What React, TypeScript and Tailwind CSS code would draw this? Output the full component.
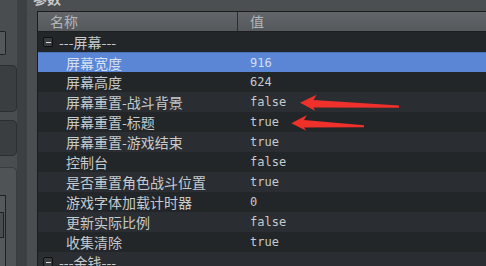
import React from 'react';

type Row = { name: string; value?: string; group?: boolean; selected?: boolean };

const rows: Row[] = [
  { name: '---屏幕---', group: true },
  { name: '屏幕宽度', value: '916', selected: true },
  { name: '屏幕高度', value: '624' },
  { name: '屏幕重置-战斗背景', value: 'false' },
  { name: '屏幕重置-标题', value: 'true' },
  { name: '屏幕重置-游戏结束', value: 'true' },
  { name: '控制台', value: 'false' },
  { name: '是否重置角色战斗位置', value: 'true' },
  { name: '游戏字体加载计时器', value: '0' },
  { name: '更新实际比例', value: 'false' },
  { name: '收集清除', value: 'true' },
  { name: '---金钱---', group: true },
];

const cjk = { fontFamily: '"Noto Sans CJK SC", "Noto Sans", sans-serif' };
const mono = { fontFamily: '"DejaVu Sans Mono", "Noto Sans CJK SC", monospace' };

function LeftWidgets() {
  return (
    <div className="w-[17px] shrink-0 flex flex-col bg-[#4a4d50]">
      <div className="h-[31px]" />
      <div className="h-[24px] w-[6px] rounded-r-[2px] border border-l-0 border-[#1f2123] bg-[#55585b]" />
      <div className="h-[10px]" />
      <div className="h-[47px] w-[17px] rounded-r-[5px] border border-l-0 border-[#2c2e31] bg-[#3b3e41]" />
      <div className="h-[8px]" />
      <div className="h-[36px] w-[17px] rounded-r-[5px] border border-l-0 border-[#2c2e31] bg-[#3b3e41]" />
      <div className="h-[11px]" />
      <div className="flex-1 w-[17px] rounded-tr-[5px] border border-l-0 border-b-0 border-[#3a3d40] bg-[#505356] flex flex-col">
        <div className="h-[27px]" />
        <div className="flex-1 w-[6px] border-t border-r border-[#1f2123] bg-[#55585b] flex flex-col">
          <div className="h-[16px]" />
          <div className="h-[26px] w-[4px] border border-l-0 border-[#1f2123] bg-[#4a4d50]" />
        </div>
      </div>
    </div>
  );
}

function GroupBox() {
  return (
    <span className="ml-[5px] mr-[6px] w-[10px] h-[10px] rounded-[2px] border border-[#0f1012] bg-[#3a3d40] flex items-center justify-center">
      <span className="block w-[5px] h-[1px] bg-[#d8d8d8]" />
    </span>
  );
}

function TableRow({ row, index }: { row: Row; index: number }) {
  const bg = row.selected
    ? 'bg-[#5a86d5] border-t border-[#4c73b8]'
    : index % 2 === 0
      ? 'bg-[#222628]'
      : 'bg-[#2a2d31]';
  const text = row.selected ? 'text-[#d6dff0]' : 'text-[#c6cacd]';
  return (
    <div className={`h-[20px] shrink-0 flex ${bg}`}>
      <div className="w-[200px] shrink-0 flex items-center">
        {row.group ? (
          <>
            <GroupBox />
            <span className={`text-[14px] leading-[20px] whitespace-nowrap ${text}`} style={cjk}>
              {row.name}
            </span>
          </>
        ) : (
          <span className={`pl-[28px] text-[14px] leading-[20px] whitespace-nowrap ${text}`} style={cjk}>
            {row.name}
          </span>
        )}
      </div>
      <div className="flex-1 flex items-center pl-[12px]">
        {row.value && (
          <span className={`text-[12px] leading-[20px] ${text}`} style={mono}>
            {row.value}
          </span>
        )}
      </div>
    </div>
  );
}

function Arrows() {
  return (
    <svg className="absolute left-0 top-0 pointer-events-none" width="486" height="266" viewBox="0 0 486 266">
      <polygon
        fill="#f0302a"
        points="300,102.7 316.5,94.7 313.5,100 399,105.6 399,107.8 313.5,107.6 315,110.8"
      />
      <polygon
        fill="#f0302a"
        points="291.3,123.3 307,115 304,120 364,125.2 364,127.2 304,127.4 306.3,130.8"
      />
    </svg>
  );
}

export default function App() {
  return (
    <div className="relative w-[486px] h-[266px] overflow-hidden flex bg-[#4a4d50]">
      <LeftWidgets />
      <div className="w-[10px] shrink-0 bg-[#3d4043]" />
      <div className="flex-1 flex flex-col min-w-0">
        <div className="h-[11px] shrink-0 overflow-hidden bg-[#4c4f52]">
          <div
            className="pl-[6px] -mt-[9px] text-[14px] leading-[14px] font-bold text-[#c4c8cc] whitespace-nowrap"
            style={cjk}
          >
            参数
          </div>
        </div>
        <div className="flex-1 flex min-h-0">
          <div className="w-[10px] shrink-0 bg-[#4b4e51]" />
          <div className="flex-1 flex flex-col border-l border-t border-[#1a1c1e] overflow-hidden bg-[#222628]">
            <div className="h-[20px] shrink-0 flex bg-gradient-to-b from-[#62666a] to-[#55595c] border-b border-[#1c1e20]">
              <div className="w-[200px] shrink-0 border-r border-[#2a2c2f] flex items-center pl-[12px]">
                <span className="text-[14px] leading-[19px] text-[#b2b6ba]" style={cjk}>名称</span>
              </div>
              <div className="flex-1 flex items-center pl-[12px]">
                <span className="text-[14px] leading-[19px] text-[#b2b6ba]" style={cjk}>值</span>
              </div>
            </div>
            {rows.map((r, i) => (
              <TableRow key={i} row={r} index={i} />
            ))}
          </div>
        </div>
      </div>
      <Arrows />
    </div>
  );
}
